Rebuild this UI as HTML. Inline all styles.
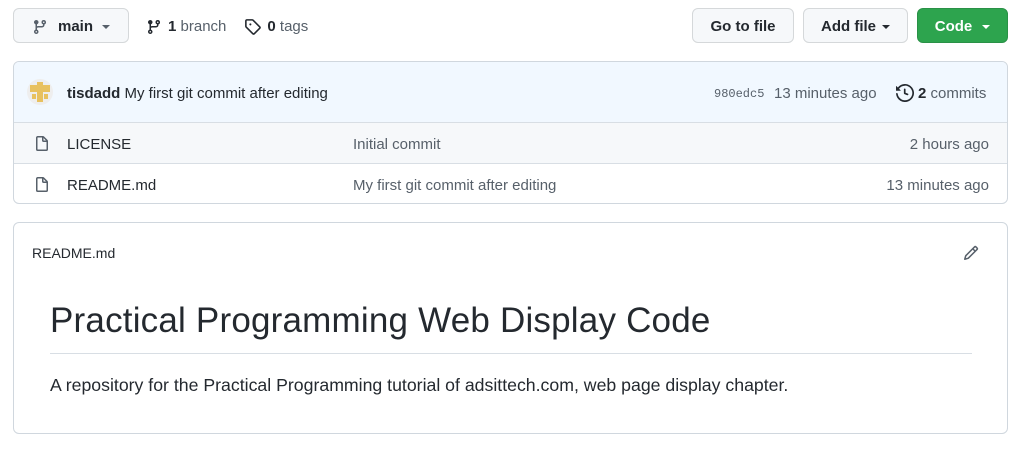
<!DOCTYPE html>
<html><head><meta charset="utf-8"><style>
body{margin:0;width:1018px;height:451px;background:#fff;font-family:"Liberation Sans",sans-serif;font-size:15px;color:#24292f;position:relative;overflow:hidden}
.a{position:absolute}
.btn{position:absolute;top:8px;height:35px;box-sizing:border-box;border:1px solid #d5d8da;border-radius:6px;background:#f6f8fa;display:flex;align-items:center;justify-content:center;font-size:15px;font-weight:bold;color:#24292f;padding-top:2px}
.caret{display:inline-block;border-left:4px solid transparent;border-right:4px solid transparent;border-top:4px solid currentColor;margin-left:6px}
.muted{color:#57606a}
.box{position:absolute;left:13px;width:995px;border:1px solid #d0d7de;border-radius:6px;box-sizing:border-box}
.row{position:absolute;left:0;right:0;height:41px;border-top:1px solid #d8dee4;display:flex;align-items:center;padding-top:2px;box-sizing:border-box}
</style></head><body>
<div class="btn" style="left:13px;width:116px"><svg width="16" height="16" viewBox="0 0 16 16" style="margin-right:10px"><path fill="#57606a" d="M9.5 3.25a2.25 2.25 0 113 2.12V6A2.5 2.5 0 0110 8.5H6a1 1 0 00-1 1v1.13a2.25 2.25 0 11-1.5 0V5.37a2.25 2.25 0 111.5 0v1.84A2.5 2.5 0 016 7h4a1 1 0 001-1v-.63A2.25 2.25 0 019.5 3.25zM4.25 12a.75.75 0 100 1.5.75.75 0 000-1.5zM3.5 3.25a.75.75 0 111.5 0 .75.75 0 01-1.5 0zm8.25-.75a.75.75 0 100 1.5.75.75 0 000-1.5z"/></svg>main<span class="caret" style="margin-left:9px;color:#57606a"></span></div>
<div class="a" style="left:146px;top:18px;display:flex;align-items:center"><svg width="16" height="16" viewBox="0 0 16 16"><path fill="#24292f" d="M9.5 3.25a2.25 2.25 0 113 2.12V6A2.5 2.5 0 0110 8.5H6a1 1 0 00-1 1v1.13a2.25 2.25 0 11-1.5 0V5.37a2.25 2.25 0 111.5 0v1.84A2.5 2.5 0 016 7h4a1 1 0 001-1v-.63A2.25 2.25 0 019.5 3.25zM4.25 12a.75.75 0 100 1.5.75.75 0 000-1.5zM3.5 3.25a.75.75 0 111.5 0 .75.75 0 01-1.5 0zm8.25-.75a.75.75 0 100 1.5.75.75 0 000-1.5z"/></svg><b style="margin-left:6px">1</b>&nbsp;<span class="muted">branch</span>
<svg width="17" height="17" viewBox="0 0 16 16" style="margin-left:18px"><path fill="#24292f" fill-rule="evenodd" d="M2.5 7.775V2.75a.25.25 0 01.25-.25h5.025a.25.25 0 01.177.073l6.25 6.25a.25.25 0 010 .354l-5.025 5.025a.25.25 0 01-.354 0l-6.25-6.25a.25.25 0 01-.073-.177zm-1.5 0V2.75C1 1.784 1.784 1 2.75 1h5.025c.464 0 .91.184 1.238.513l6.25 6.25a1.75 1.75 0 010 2.474l-5.026 5.026a1.75 1.75 0 01-2.474 0l-6.25-6.25A1.75 1.75 0 011 7.775zM6 5a1 1 0 100 2 1 1 0 000-2z"/></svg><b style="margin-left:6px">0</b>&nbsp;<span class="muted">tags</span></div>
<div class="btn" style="left:692px;width:102px">Go to file</div>
<div class="btn" style="left:803px;width:105px">Add file<span class="caret"></span></div>
<div class="btn" style="left:917px;width:91px;background:#2da44e;border-color:#2a9147;color:#fff">Code<span class="caret" style="margin-left:10px"></span></div>

<div class="box" style="top:61px;height:143px;overflow:hidden">
<div class="a" style="left:0;top:0;right:0;height:60px;background:#f1f8ff"></div>
<svg class="a" style="left:13px;top:17px" width="26" height="26" viewBox="0 0 26 26"><circle cx="13" cy="13" r="13" fill="#eeeeee"/><rect x="3" y="6" width="7" height="7" fill="#e8c15f"/><rect x="16" y="6" width="7" height="7" fill="#e8c15f"/><rect x="10" y="3" width="6" height="20" fill="#e8c15f"/><rect x="5" y="15" width="4" height="5" fill="#e8c15f"/><rect x="17" y="15" width="4" height="5" fill="#e8c15f"/></svg>
<div class="a" style="left:53px;top:23px"><b>tisdadd</b> My first git commit after editing</div>
<div class="a" style="left:700px;top:25px;font-family:'Liberation Mono',monospace;font-size:12px;color:#57606a">980edc5</div>
<div class="a muted" style="left:760px;top:23px">13 minutes ago</div>
<div class="a" style="left:882px;top:22px;display:flex;align-items:center"><svg width="18" height="18" viewBox="0 0 16 16"><path fill="#24292f" d="M1.643 3.143L.427 1.927A.25.25 0 000 2.104V5.75c0 .138.112.25.25.25h3.646a.25.25 0 00.177-.427L2.715 4.215a6.5 6.5 0 11-1.18 4.458.75.75 0 10-1.493.154 8.001 8.001 0 101.6-5.684zM7.75 4a.75.75 0 01.75.75v2.992l2.028.812a.75.75 0 01-.557 1.392l-2.5-1A.75.75 0 017 8.25v-3.5A.75.75 0 017.75 4z"/></svg><b style="margin-left:4px">2</b>&nbsp;<span class="muted">commits</span></div>
<div class="row" style="top:60px;background:#f6f8fa"><svg class="a" style="left:20px" width="16" height="16" viewBox="0 0 16 16"><path fill="#57606a" d="M3.75 1.5a.25.25 0 00-.25.25v11.5c0 .138.112.25.25.25h8.5a.25.25 0 00.25-.25V6H9.75A1.75 1.75 0 018 4.25V1.5H3.75zm5.75.56v2.19c0 .138.112.25.25.25h2.19L9.5 2.06zM2 1.75C2 .784 2.784 0 3.75 0h5.086c.464 0 .909.184 1.237.513l3.414 3.414c.329.328.513.773.513 1.237v8.086A1.75 1.75 0 0112.25 15h-8.5A1.75 1.75 0 012 13.25V1.75z"/></svg><span class="a" style="left:53px">LICENSE</span><span class="a muted" style="left:339px">Initial commit</span><span class="a muted" style="right:18px">2 hours ago</span></div>
<div class="row" style="top:101px"><svg class="a" style="left:20px" width="16" height="16" viewBox="0 0 16 16"><path fill="#57606a" d="M3.75 1.5a.25.25 0 00-.25.25v11.5c0 .138.112.25.25.25h8.5a.25.25 0 00.25-.25V6H9.75A1.75 1.75 0 018 4.25V1.5H3.75zm5.75.56v2.19c0 .138.112.25.25.25h2.19L9.5 2.06zM2 1.75C2 .784 2.784 0 3.75 0h5.086c.464 0 .909.184 1.237.513l3.414 3.414c.329.328.513.773.513 1.237v8.086A1.75 1.75 0 0112.25 15h-8.5A1.75 1.75 0 012 13.25V1.75z"/></svg><span class="a" style="left:53px">README.md</span><span class="a muted" style="left:339px">My first git commit after editing</span><span class="a muted" style="right:18px">13 minutes ago</span></div>
</div>

<div class="box" style="top:222px;height:212px">
<div class="a" style="left:18px;top:22px;font-size:14px">README.md</div>
<svg class="a" style="left:949px;top:22px" width="16" height="16" viewBox="0 0 16 16"><path fill="#57606a" d="M11.013 1.427a1.75 1.75 0 012.474 0l1.086 1.086a1.75 1.75 0 010 2.474l-8.61 8.61c-.21.21-.47.364-.756.445l-3.251.93a.75.75 0 01-.927-.928l.929-3.25a1.75 1.75 0 01.445-.758l8.61-8.61zm1.414 1.06a.25.25 0 00-.354 0L10.811 3.75l1.439 1.44 1.263-1.263a.25.25 0 000-.354l-1.086-1.086zM11.189 6.25L9.75 4.81l-6.286 6.287a.25.25 0 00-.064.108l-.558 1.953 1.953-.558a.249.249 0 00.108-.064l6.286-6.286z"/></svg>
<div class="a" style="left:36px;top:78px;font-size:35px;line-height:40px;font-weight:500;letter-spacing:0.2px">Practical Programming Web Display Code</div>
<div class="a" style="left:36px;top:130px;width:922px;height:1px;background:#d8dee4"></div>
<div class="a" style="left:36px;top:152px;font-size:17.7px">A repository for the Practical Programming tutorial of adsittech.com, web page display chapter.</div>
</div>
</body></html>
